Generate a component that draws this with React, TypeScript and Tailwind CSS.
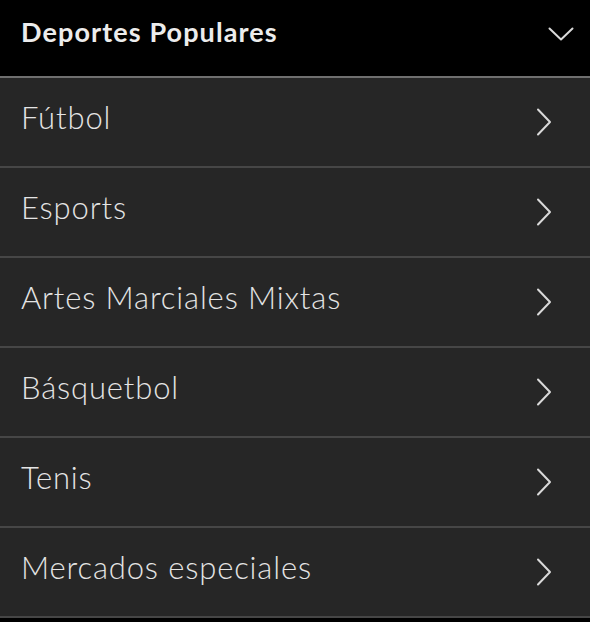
import React from 'react';

const sports = ['Fútbol', 'Esports', 'Artes Marciales Mixtas', 'Básquetbol', 'Tenis', 'Mercados especiales'];

function ChevronRight() {
  return (
    <svg width="16" height="28" viewBox="0 0 16 28" fill="none" className="shrink-0">
      <path d="M2 1.5 L14 14 L2 26.5" stroke="#d9d9d9" strokeWidth="2" strokeLinecap="round" strokeLinejoin="round" />
    </svg>
  );
}

function ChevronDown() {
  return (
    <svg width="26" height="14" viewBox="0 0 26 14" fill="none" className="shrink-0">
      <path d="M1.5 1.5 L13 12.5 L24.5 1.5" stroke="#d9d9d9" strokeWidth="2" strokeLinecap="round" strokeLinejoin="round" />
    </svg>
  );
}

export default function App() {
  return (
    <div className="w-[590px] h-[622px] bg-black font-['Lato',sans-serif] overflow-hidden">
      {/* Header */}
      <div className="h-[78px] flex items-start justify-between pl-[21px] pr-[16px] border-b-2 border-[#6f6f6f]">
        <h2 className="mt-[14px] text-[27px] font-bold text-[#ececec] leading-[36px] tracking-[1.1px]">Deportes Populares</h2>
        <div className="mt-[27px]">
          <ChevronDown />
        </div>
      </div>

      {/* Sports list */}
      <ul className="bg-[#262626]">
        {sports.map((s) => (
          <li
            key={s}
            className="h-[90px] flex items-center justify-between pl-[21px] pr-[38px] border-b-2 border-[#464646]"
          >
            <span className="text-[31px] font-light text-[#e4e4e4] tracking-[0.85px] pb-[10px]">{s}</span>
            <ChevronRight />
          </li>
        ))}
      </ul>
    </div>
  );
}
